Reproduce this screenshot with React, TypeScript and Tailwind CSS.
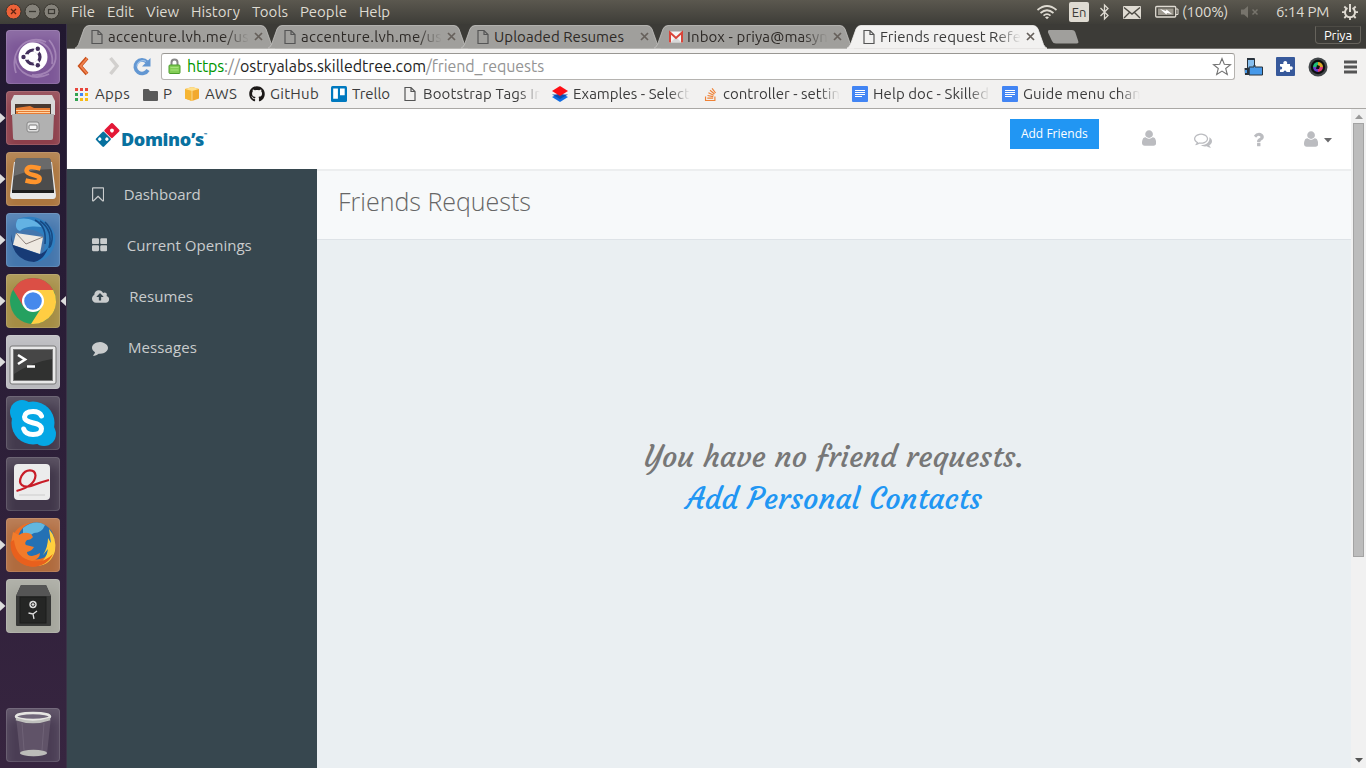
import { useLayoutEffect, useRef, useState, type ReactNode } from "react";
import { FaGithub, FaStackOverflow } from "react-icons/fa";

/* One line of text whose letter spacing is tuned so that it fills `w` pixels. */
function Fit({ w, className = "", children }: { w: number; className?: string; children: string }) {
  const ref = useRef<HTMLSpanElement>(null);
  const [ls, setLs] = useState(0);
  useLayoutEffect(() => {
    if (ref.current) {
      ref.current.style.letterSpacing = "0px";
      const natural = ref.current.getBoundingClientRect().width;
      const next = (w - natural) / children.length;
      ref.current.style.letterSpacing = `${next}px`;
      setLs(next);
    }
  }, [w, children]);
  return (
    <span ref={ref} className={`inline-block shrink-0 whitespace-pre ${className}`} style={{ letterSpacing: `${ls}px` }}>
      {children}
    </span>
  );
}

const UI = "font-['Ubuntu','Noto_Sans',sans-serif]";
const FADE = "[mask-image:linear-gradient(to_right,black_82%,transparent)]";

/* ---------- icons ---------- */

const userPath =
  "M1408 1405q0 120-73 189.5t-194 69.5h-874q-121 0-194-69.5t-73-189.5q0-53 3.5-103.5t14-109 26.5-108.5 43-97.5 62-81 85.5-53.5 111.5-20q9 0 42 21.5t74.5 48 108 48 133.5 21.5 133.5-21.5 108-48 74.5-48 42-21.5q61 0 111.5 20t85.5 53.5 62 81 43 97.5 26.5 108.5 14 109 3.5 103.5zm-320-893q0 159-112.5 271.5t-271.5 112.5-271.5-112.5-112.5-271.5 112.5-271.5 271.5-112.5 271.5 112.5 112.5 271.5z";
const commentsPath =
  "M704 384q-153 0-286 52t-211.5 141-78.5 191q0 82 53 158t149 132l97 56-35 84q34-20 62-39l44-31 53 10q78 14 153 14 153 0 286-52t211.5-141 78.5-191-78.5-191-211.5-141-286-52zm0-128q191 0 353.5 68.5t256.5 186.5 94 257-94 257-256.5 186.5-353.5 68.5q-86 0-176-16-124 88-278 128-36 9-86 16h-3q-11 0-20.5-8t-11.5-21q-1-3-1-6.5t.5-6.5 2-6l2.5-5t3.5-5.5 4-5 4.5-5 4-4.5q5-6 23-25t26-29.5 22.5-29 25-38.5 20.5-44q-124-72-195-177t-71-224q0-139 94-257t256.5-186.5 353.5-68.5zm822 1169q10 24 20.5 44t25 38.5 22.5 29 26 29.5 23 25q1 1 4 4.5t4.5 5 4 5 3.5 5.5l2.5 5t2 6 .5 6.5-1 6.5q-3 14-13 22t-22 7q-50-7-86-16-154-40-278-128-90 16-176 16-271 0-472-132 58 4 88 4 161 0 309-45t264-129q125-92 192-212t67-254q0-77-23-152 129 71 204 178t75 230q0 120-71 224.5t-195 176.5z";
const questionPath =
  "M704 1256v240q0 16-12 28t-28 12h-240q-16 0-28-12t-12-28v-240q0-16 12-28t28-12h240q16 0 28 12t12 28zm316-600q0 54-15.5 101t-35 76.5-55 59.5-57.5 43.5-61 35.5q-41 23-68.5 65t-27.5 67q0 17-12 32.5t-28 15.5h-240q-15 0-25.5-18.5t-10.5-37.5v-45q0-83 65-156.5t143-108.5q59-27 84-56t25-76q0-42-46.5-74t-107.5-32q-65 0-108 29-35 25-107 115-13 16-31 16-12 0-25-8l-164-125q-13-10-15.5-25t5.5-28q160-266 464-266 80 0 161 31t146 83 106 127.5 41 158.5z";
const cloudPath =
  "M1280 864q0-14-9-23l-352-352q-9-9-23-9t-23 9l-351 351q-10 12-10 24 0 14 9 23t23 9h224v352q0 13 9.5 22.5t22.5 9.5h192q13 0 22.5-9.5t9.5-22.5v-352h224q13 0 22.5-9.5t9.5-22.5zm640 288q0 159-112.5 271.5t-271.5 112.5h-1088q-185 0-316.5-131.5t-131.5-316.5q0-130 70-240t188-165q-2-30-2-43 0-212 150-362t362-150q156 0 285.5 87t188.5 231q71-62 166-62 106 0 181 75t75 181q0 76-41 138 130 31 213.5 135.5t83.5 238.5z";
const commentPath =
  "M1792 896q0 174-120 321.5t-326 233-450 85.5q-70 0-145-8-198 175-460 223-49 14-114 22-17 2-30.5-9t-17.5-29v-1q-3-4-.5-12t2-10 4.5-9.5l6-9t7-8.5 8-9q7-8 31-34.5t34.5-38 31-39.5 32.5-51 27-59 26-76q-157-89-247.5-220t-90.5-281q0-130 71-248.5t191-204.5 286-136.5 348-50.5q244 0 450 85.5t326 233 120 321.5z";
const bookmarkPath =
  "M1152 256h-1024v1242l423-406 89-85 89 85 423 406v-1242zm12-128q23 0 44 9 33 13 52.5 41t19.5 62v1289q0 34-19.5 62t-52.5 41q-19 8-44 8-48 0-83-32l-441-424-441 424q-36 33-83 33-23 0-44-9-33-13-52.5-41t-19.5-62v-1289q0-34 19.5-62t52.5-41q21-9 44-9h1048z";
const thLargePath =
  "M768 1024v384q0 52-38 90t-90 38h-512q-52 0-90-38t-38-90v-384q0-52 38-90t90-38h512q52 0 90 38t38 90zm0-768v384q0 52-38 90t-90 38h-512q-52 0-90-38t-38-90v-384q0-52 38-90t90-38h512q52 0 90 38t38 90zm896 768v384q0 52-38 90t-90 38h-512q-52 0-90-38t-38-90v-384q0-52 38-90t90-38h512q52 0 90 38t38 90zm0-768v384q0 52-38 90t-90 38h-512q-52 0-90-38t-38-90v-384q0-52 38-90t90-38h512q52 0 90 38t38 90z";

function Glyph({ d, vw, size }: { d: string; vw: number; size: number }) {
  return (
    <svg width={(vw / 1792) * size} height={size} viewBox={`0 0 ${vw} 1792`} fill="currentColor" className="shrink-0">
      <path d={d} />
    </svg>
  );
}

const Doc = () => (
  <svg width="12" height="16" viewBox="0 0 12 16" fill="none" stroke="#555" strokeWidth="1.2" className="shrink-0">
    <path d="M1 1.500h6l4 4v9H1zM7 1.500v4h4" />
  </svg>
);

const Gmail = () => (
  <svg width="16" height="16" viewBox="0 0 16 16" className="shrink-0">
    <rect x="1" y="2.500" width="14" height="11" fill="#f4f4f4" />
    <path d="M3 13l5-5 5 5z" fill="#d8d8d8" />
    <path d="M2 13.500v-10l6 5.500 6-5.500v10" fill="none" stroke="#d9453a" strokeWidth="2" />
  </svg>
);

const GDoc = () => (
  <svg width="16" height="16" viewBox="0 0 16 16" className="shrink-0">
    <rect width="16" height="16" rx="1" fill="#4285f4" />
    <path d="M3 4.500h10M3 6.500h10M3 8.500h10M3 10.500h7" stroke="#fff" />
  </svg>
);

/* ---------- desktop panel ---------- */

function TopPanel() {
  return (
    <header className={`flex h-6 shrink-0 items-center bg-linear-to-b from-[#5b584f] to-[#3e3d38] text-[15px] leading-6 text-[#dfdbd2] ${UI}`}>
      <svg width="71" height="24" viewBox="0 0 71 24" className="shrink-0">
        <circle cx="13.5" cy="11.5" r="7.5" fill="#ee6238" stroke="#39362f" />
        <path d="M11 9l5 5m0-5l-5 5" stroke="#5e2412" strokeWidth="1.3" />
        <circle cx="32.5" cy="11.5" r="7.5" fill="#85827a" stroke="#39362f" />
        <path d="M29 11.5h7" stroke="#3b3933" strokeWidth="1.3" />
        <circle cx="51.500" cy="11.500" r="7.5" fill="#85827a" stroke="#39362f" />
        <rect x="48.500" y="9.500" width="6" height="4" fill="none" stroke="#3b3933" strokeWidth="1.200" />
      </svg>
      <nav className="flex gap-3">
        <Fit w={24}>File</Fit>
        <Fit w={27}>Edit</Fit>
        <Fit w={33}>View</Fit>
        <Fit w={49}>History</Fit>
        <Fit w={36}>Tools</Fit>
        <Fit w={47}>People</Fit>
        <Fit w={31}>Help</Fit>
      </nav>
      <div className="ml-auto flex items-center">
        <svg width="22" height="16" viewBox="0 0 22 16" fill="none" stroke="#dfdbd2" strokeWidth="1.7">
          <path d="M1.500 6Q11-2 20.500 6M4.500 9Q11 3.500 17.500 9M7.500 11.700Q11 8.500 14.500 11.700" />
          <path d="M9 13.200l2 2 2-2q-2-1.500-4 0z" fill="#dfdbd2" stroke="none" />
        </svg>
        <span className="ml-[11px] flex h-5 w-5 items-center justify-center rounded-[2px] bg-[#dfdbd2] text-[13px] text-[#3c3b37]">En</span>
        <svg width="11" height="18" viewBox="0 0 11 18" fill="none" stroke="#dfdbd2" strokeWidth="1.300" className="ml-[10px]">
          <path d="M1.500 5L9 12.500 5.500 16V2L9 5.500 1.500 13" />
        </svg>
        <svg width="18" height="13" viewBox="0 0 18 13" className="ml-[13px]">
          <rect width="18" height="13" rx="1" fill="#dfdbd2" />
          <path d="M1 1.500L9 8l8-6.500M1 12l5.500-5.500M17 12l-5.500-5.500" fill="none" stroke="#4b4942" strokeWidth="1.400" />
        </svg>
        <svg width="24" height="14" viewBox="0 0 24 14" className="ml-[14px]">
          <rect x=".7" y="1.500" width="20" height="10.500" rx="1" fill="none" stroke="#dfdbd2" strokeWidth="1.300" />
          <path d="M21 4h2v5.500h-2" fill="none" stroke="#dfdbd2" />
          <rect x="3" y="3.500" width="15.500" height="6.500" fill="#9c988e" />
          <path d="M5 4l6 2 .5-1.500 5.500 4.500-5-1-.6 1.500z" fill="#fff" />
        </svg>
        <Fit w={46} className="ml-[3px]">(100%)</Fit>
        <svg width="18" height="14" viewBox="0 0 18 14" className="ml-[13px]" fill="#77746c">
          <path d="M0 4.500h3l4-3.500v12l-4-3.500H0z" />
          <path d="M11.500 4.500l5 5m0-5l-5 5" stroke="#77746c" strokeWidth="1.500" />
        </svg>
        <Fit w={53} className="ml-[17px]">6:14 PM</Fit>
        <svg width="18" height="18" viewBox="0 0 18 18" className="ml-[12px] mr-[7px]" fill="none" stroke="#dfdbd2">
          <path d="M6.500 5a5 5 0 1 0 5 0" strokeWidth="2" />
          <path d="M9 1v8" strokeWidth="2" />
          <path d="M1 9.200h3M14 9.200h3M3.300 3.500l2 2M14.700 3.500l-2 2M3.300 15l2-2M14.700 15l-2-2M9 14v3" strokeWidth="1.800" />
        </svg>
      </div>
    </header>
  );
}

/* ---------- launcher ---------- */

function Tile({ bg, running, active, children }: { bg: string; running?: boolean; active?: boolean; children: ReactNode }) {
  return (
    <div className="relative flex w-full justify-center">
      {running && (
        <svg width="6" height="10" viewBox="0 0 6 10" className="absolute top-[22px] left-0">
          <path d="M0 0l5.500 5L0 10z" fill="#ddd" />
        </svg>
      )}
      {active && (
        <svg width="6" height="10" viewBox="0 0 6 10" className="absolute top-[22px] right-0">
          <path d="M6 0L.5 5 6 10z" fill="#ddd" />
        </svg>
      )}
      <div className={`h-[54px] w-[54px] overflow-hidden rounded-[4px] shadow-[inset_0_0_0_1px_rgba(255,255,255,0.12),inset_0_9px_12px_rgba(255,255,255,0.14)] ${bg}`}>
        <svg width="54" height="54" viewBox="0 0 54 54">{children}</svg>
      </div>
    </div>
  );
}

function Launcher() {
  return (
    <aside className="flex w-[67px] shrink-0 flex-col gap-[7px] border-r border-[#3a3347] bg-linear-to-b from-[#211830] to-[#372540] pt-[6px] pb-[6px]">
      <Tile bg="bg-[#7c5797]">
        <path d="M10 43C3 22 20 3 40 12M43 10c14 16 5 37-17 35M17 18C30 3 49 16 46 34M9 27c2 18 20 24 34 17" fill="none" stroke="#c8aed3" strokeWidth="1.800" opacity=".5" />
        <circle cx="27" cy="27" r="14.500" fill="#fff" />
        <circle cx="27" cy="27" r="7" fill="none" stroke="#43305d" strokeWidth="3.200" />
        <path d="M17 27h5M32 18.300l-2.500 4.300M32 35.700l-2.500-4.300" stroke="#fff" strokeWidth="5.500" />
        <circle cx="17.500" cy="27" r="2.200" fill="#43305d" />
        <circle cx="31.800" cy="18.800" r="2.200" fill="#43305d" />
        <circle cx="31.800" cy="35.200" r="2.200" fill="#43305d" />
      </Tile>
      <Tile bg="bg-[#8d3f4b]" running>
        <path d="M8 4h38l3 6v14H5V10z" fill="#d9d9d9" />
        <path d="M9 13h36v12H9z" fill="#493a32" />
        <path d="M10 17l14-2 4 2h16v7H10z" fill="#e77b33" />
        <path d="M10 19.500h34M12 21.500h32" stroke="#ffd3a1" />
        <path d="M6 23h42l-1 24q0 2-2 2H9q-2 0-2-2z" fill="#b1b1b1" />
        <rect x="21" y="31" width="12" height="10" rx="2" fill="#dedede" stroke="#858585" />
        <rect x="23" y="34" width="8" height="4.500" rx="1" fill="#f7f7f7" stroke="#777" />
      </Tile>
      <Tile bg="bg-[#ac763f]" running>
        <path d="M8 10L4 43q0 4 3 4h40q3 0 3-4L46 10z" fill="#e8e8e8" />
        <path d="M12 6h30q3 0 3 4l3 28H6L9 10q0-4 3-4z" fill="#4c4c4c" />
        <path d="M6 38h42v3H6z" fill="#1d1d1d" />
        <path d="M12 6h30q3 0 3 4l1 7q-20 0-38 7L9 10q0-4 3-4z" fill="#888" opacity=".5" />
        <path d="M34.500 16.500q-13-4-14 2 0 3 7 4.500t6 4.500q-1 4.500-14 1" fill="none" stroke="#ff942c" strokeWidth="4.500" />
      </Tile>
      <Tile bg="bg-[#4476ad]" running>
        <path d="M12 6C26 0 44 6 49 22c2 12-6 26-20 27 10-8 12-18 8-27-6-5-14-7-23-4-4-2-5-8-2-12z" fill="#2f7fc0" />
        <path d="M12 6c9-2 18 1 24 8-8-1-17-1-22 4-5-1-5-8-2-12z" fill="#63b2e3" />
        <path d="M34 8c9 6 12 15 9 27M39 9c8 8 9 16 5 25M29 7c9 5 11 12 10 24" fill="none" stroke="#174a84" strokeWidth="1.600" />
        <path d="M10 20l27 4-3 17-27-9z" fill="#eee9e1" />
        <path d="M10 20l10 11 17-7" fill="none" stroke="#8c817b" />
        <path d="M5 21l2 11 26 9q4 0 9-6-4 12-14 14Q5 47 5 21z" fill="#173b76" />
      </Tile>
      <Tile bg="bg-[#a58d44]" running active>
        <circle cx="27" cy="27" r="23" fill="#25a160" />
        <path d="M27 16h20.200A23 23 0 0 1 25 50l11.500-18z" fill="#ffcd42" />
        <path d="M7.100 15.500A23 23 0 0 1 47.200 16H27L17 32z" fill="#db4f45" />
        <circle cx="27" cy="27" r="11" fill="#fff" />
        <circle cx="27" cy="27" r="8.800" fill="#4689ec" />
      </Tile>
      <Tile bg="bg-[#b9b9bd]" running>
        <rect x="4" y="11" width="46" height="38" rx="2" fill="#e8e8e8" stroke="#777" />
        <rect x="7.500" y="14.500" width="39" height="31" fill="#303130" stroke="#777" />
        <path d="M8 15h38v9q-20 3-38 15z" fill="#555" opacity=".6" />
        <path d="M12 20l7 4.500-7 4.500M21 31.500h8" fill="none" stroke="#fff" strokeWidth="2.600" />
      </Tile>
      <Tile bg="bg-[#433a4d]">
        <circle cx="27" cy="27" r="21.500" fill="#05a7e5" />
        <circle cx="16" cy="16" r="12" fill="#05a7e5" />
        <circle cx="38" cy="38" r="12" fill="#05a7e5" />
        <path d="M35.500 20q-2-4.500-8.500-4.500-8 0-8.500 5.500 0 4 8 5.700 9 1.800 9 6Q35.500 38.500 27 38.500q-7.500 0-9.300-5.500" fill="none" stroke="#fff" strokeWidth="5" strokeLinecap="round" />
      </Tile>
      <Tile bg="bg-[#41374a]">
        <rect x="8" y="7" width="36" height="36" rx="4" fill="#ececec" />
        <path d="M10.500 34Q29 29 29.500 18.500C29 12 20 11 15.500 19 11 28 18 31 25 29q10-4 18-6" fill="none" stroke="#c81d28" strokeWidth="2.200" />
        <path d="M13 38h26" stroke="#ccc" />
      </Tile>
      <Tile bg="bg-[#b06b3e]" running>
        <circle cx="27" cy="26.500" r="22" fill="#ee6f24" />
        <circle cx="30" cy="23" r="18.500" fill="#2471b4" />
        <path d="M17 10q12-9 22-3-3 8-11 8-5 4-11 3z" fill="#62b7df" />
        <path d="M43 11q8 9 6 22-4 14-18 15 10-7 11-17l-5 6q5-8 5-17l3 5z" fill="#ffcf3e" />
        <path d="M7 14l6 3q5-4 12-1l2 3q-2 3-6 3-3 3-1 5l8 2q-2 4-7 5 0 4 5 4 5-1 8-3 0 6-8 8-12 2-18-8-4-9-1-21z" fill="#f27b2a" />
        <path d="M4.500 24Q4 44 24 48.500 40 50 47 36q-9 9-21 7Q10 40 8 22z" fill="#e8601d" />
      </Tile>
      <Tile bg="bg-[#a5a69d]" running>
        <path d="M15 6h25l5 11v29q0 1-1 1H11q-1 0-1-1V17z" fill="#373837" />
        <path d="M15 6h25l5 11H10z" fill="#555" />
        <rect x="14" y="18" width="26" height="26" fill="#252625" stroke="#1c1c1c" />
        <circle cx="27" cy="25.500" r="3.700" fill="#ddd" />
        <circle cx="27" cy="25.500" r="1.800" fill="none" stroke="#282828" />
        <path d="M22.500 34l4.500 1 4-3M27 35l1 5" stroke="#ddd" strokeWidth="1.300" fill="none" />
      </Tile>
      <div className="mt-auto">
        <Tile bg="bg-[#4a3d54]">
          <path d="M10 9l4 37q14 5 27 0l4-37z" fill="#75697c" opacity=".5" />
          <path d="M16 15l2 27M38 15l-2 27" stroke="#9a90a0" opacity=".25" />
          <ellipse cx="27.500" cy="45" rx="13.500" ry="3.200" fill="#bcbcb9" />
          <ellipse cx="27" cy="8.500" rx="17" ry="3.500" fill="#70677a" stroke="#e6e6e3" strokeWidth="2.500" />
          <path d="M10 11q17 6 34 0" fill="none" stroke="#bfc0bd" strokeWidth="2.500" />
        </Tile>
      </div>
    </aside>
  );
}

/* ---------- browser ---------- */

function Tab({ icon, title, w, active }: { icon: ReactNode; title: string; w: number; active?: boolean }) {
  return (
    <div className={`relative mr-[-7px] flex h-[25px] w-[200px] shrink-0 items-center pl-4 ${active ? "z-10" : ""}`}>
      <svg width="200" height="25" viewBox="0 0 200 25" className="absolute inset-0">
        <path
          d="M-1 24.500Q2 24 3.500 20.500L9 5Q10.500 1.500 14 1.500H186Q189.500 1.500 191 5L196.500 20.500Q198 24 201 24.500z"
          fill={active ? "#f2f1f0" : "#a09f9c"}
          stroke={active ? "#f2f1f0" : "#c4c3c0"}
          strokeWidth=".8"
        />
      </svg>
      <div className="relative flex items-center">
        <span className="flex w-[17px]">{icon}</span>
        <div className={`flex w-[141px] overflow-hidden ${w > 135 ? FADE : ""}`}>
          <Fit w={w} className={active ? "text-[#3b3b3b]" : "text-[#2d2926]"}>{title}</Fit>
        </div>
        <svg width="9" height="9" viewBox="0 0 9 9" className="ml-[5px]">
          <path d="M1 1l7 7m0-7L1 8" stroke="#66605b" strokeWidth="1.700" />
        </svg>
      </div>
    </div>
  );
}

function TabStrip() {
  return (
    <div className={`flex h-[25px] shrink-0 border-b border-[#74726f] bg-[#3c3b37] pl-2 text-[15px] leading-5 ${UI}`}>
      <Tab icon={<Doc />} title="accenture.lvh.me/us" w={141} />
      <Tab icon={<Doc />} title="accenture.lvh.me/us" w={141} />
      <Tab icon={<Doc />} title="Uploaded Resumes" w={130} />
      <Tab icon={<span className="-ml-[2px]"><Gmail /></span>} title="Inbox - priya@masyn" w={141} />
      <Tab icon={<Doc />} title="Friends request Refe" w={141} active />
      <svg width="32" height="25" viewBox="0 0 32 25" className="ml-[7px] shrink-0">
        <path d="M2 6h23q2.500 0 3.200 2l3 9q.8 2.500-1.500 2.500H9q-3 0-4-2.500L1 8.500Q.5 6 2 6z" fill="#a09f9c" />
      </svg>
      <div className="mt-[2px] mr-[5px] ml-auto flex h-[18px] w-[46px] items-center justify-center self-start rounded-b-[4px] border border-[#66635c] border-t-[#4d4b45] text-[13px] text-white">
        <Fit w={28}>Priya</Fit>
      </div>
    </div>
  );
}

function Toolbar() {
  return (
    <div className={`flex h-[31px] shrink-0 items-center bg-[#f2f1f0] pt-1 text-[16px] leading-6 ${UI}`}>
      <svg width="94" height="27" viewBox="0 0 94 27" fill="none" className="shrink-0">
        <path d="M20 5l-7 8 7 8" stroke="#c84f19" strokeWidth="3.800" />
        <path d="M20 5.500L13.500 13l6.500 7.500" stroke="#f08250" strokeWidth="1.800" />
        <path d="M43.500 5l6.500 8-6.500 8" stroke="#d2d0ce" strokeWidth="3.500" />
        <path d="M80 9a6.800 6.800 0 1 0 1 8" stroke="#6397d2" strokeWidth="3.600" />
        <path d="M83.500 5v8.500H75z" fill="#6397d2" />
        <path d="M79 8.500a6 6 0 0 0-9 5" stroke="#a3c5eb" strokeWidth="1.200" />
      </svg>
      <div className="flex h-[27px] w-[1074px] shrink-0 items-center rounded-[3px] border border-[#b5b3b0] border-t-[#999793] bg-white pl-[6px]">
        <svg width="13" height="17" viewBox="0 0 13 17">
          <path d="M3.500 8V4.500a3 3 0 0 1 6 0V8" fill="none" stroke="#888" strokeWidth="2" />
          <rect x="1" y="7" width="11" height="8.500" rx="1" fill="#83cd55" stroke="#4b9c2c" />
          <path d="M2.500 9.500h8M2.500 12h8" stroke="#a6e27d" />
        </svg>
        <div className="ml-[6px] flex pb-[2px]">
          <Fit w={37} className="text-[#009600]">https</Fit>
          <Fit w={16} className="text-[#8d8d8d]">://</Fit>
          <Fit w={186} className="text-[#1e1e1e]">ostryalabs.skilledtree.com</Fit>
          <Fit w={118} className="text-[#949494]">/friend_requests</Fit>
        </div>
        <svg width="20" height="19" viewBox="0 0 20 19" className="mr-[2px] ml-auto" fill="none" stroke="#737373" strokeWidth="1.100">
          <path d="M10 1.500l2.300 5.700 6.200.4-4.800 3.900 1.600 6-5.300-3.400-5.300 3.400 1.600-6L1.500 7.600l6.200-.4z" />
        </svg>
      </div>
      <svg width="19" height="19" viewBox="0 0 19 19" className="ml-[9px] shrink-0">
        <path d="M3.500 1.500h7v11h-7z" fill="#86beee" stroke="#29333d" />
        <path d="M8 10h2V8h1v2h7.500v8H5v-8z" fill="#4799e9" stroke="#29333d" />
        <path d="M.5 11h5v7H1zM3 1h7v2H3z" fill="#29333d" />
        <path d="M1 13h2v3H1z" fill="#4799e9" />
      </svg>
      <svg width="19" height="19" viewBox="0 0 19 19" className="ml-[13px] shrink-0">
        <rect width="19" height="19" rx="1" fill="#37599b" />
        <path d="M4 7h3.500a2 2 0 1 1 3.500 0h3v2.500a1.800 1.800 0 1 1 0 3V15h-3.500a1.500 1.500 0 1 0-3 0H4v-2.500a1.600 1.600 0 1 0 0-3z" fill="#fff" />
      </svg>
      <svg width="20" height="20" viewBox="0 0 20 20" className="ml-[13px] shrink-0">
        <circle cx="10" cy="10" r="9.500" fill="#42474a" />
        <circle cx="10" cy="10" r="7.200" fill="#0c0e0f" />
        <path d="M10 10V5a5 5 0 0 1 5 5z" fill="#d8a728" />
        <path d="M10 10h5a5 5 0 0 1-5 5z" fill="#df3a77" />
        <path d="M10 10v5a5 5 0 0 1-5-5z" fill="#673fcb" />
        <path d="M10 10H5a5 5 0 0 1 5-5z" fill="#1dbe79" />
        <path d="M9 8l3 1-1 3H8z" fill="#111" />
      </svg>
      <svg width="13" height="14" viewBox="0 0 13 14" className="ml-[16px] shrink-0">
        <path d="M0 2h13M0 7h13M0 12h13" stroke="#555" strokeWidth="2.800" />
      </svg>
    </div>
  );
}

function Mark({ icon, label, w, box, clip }: { icon: ReactNode; label: string; w: number; box: string; clip?: boolean }) {
  return (
    <div className={`flex shrink-0 items-center ${box}`}>
      {icon}
      <div className={`ml-auto flex overflow-hidden ${clip ? `w-[117px] ${FADE}` : ""}`}>
        <Fit w={w}>{label}</Fit>
      </div>
    </div>
  );
}

function Bookmarks() {
  const dots = ["#e7453c", "#e7453c", "#e7453c", "#32a350", "#4285f4", "#f8bb15", "#32a350", "#f8bb15", "#f8bb15"];
  return (
    <div className={`flex h-[29px] shrink-0 items-center border-b border-[#aaa8a5] bg-[#f2f1f0] pl-2 text-[15px] leading-5 text-[#3c3c3c] ${UI}`}>
      <Mark box="w-[55px]" w={35} label="Apps" icon={
        <svg width="13" height="13" viewBox="0 0 13 13">
          {dots.map((c, i) => <rect key={i} x={(i % 3) * 5} y={Math.floor(i / 3) * 5} width="3" height="3" fill={c} />)}
        </svg>} />
      <div className="ml-[13px]"><Mark box="w-[29px]" w={9} label="P" icon={
        <svg width="15" height="13" viewBox="0 0 15 13"><path d="M1 1h4.500L7 3h7q1 0 1 1v8q0 1-1 1H1q-1 0-1-1V2q0-1 1-1z" fill="#5a5a5a" /></svg>} /></div>
      <div className="ml-[12px]"><Mark box="w-[53px]" w={32} label="AWS" icon={
        <svg width="16" height="16" viewBox="0 0 16 16"><path d="M1 3l7-2 7 2v9.500L8 15l-7-2.500z" fill="#f2a92d" /><path d="M1 3l7 2v10l-7-2.500z" fill="#f6b533" /><path d="M1 3l7-2 7 2-7 2z" fill="#ffe08b" /><path d="M8 5v10" stroke="#fff1cb" strokeWidth=".6" /></svg>} /></div>
      <div className="ml-[12px]"><Mark box="w-[70px]" w={49} label="GitHub" icon={<FaGithub size={16} color="#1b1817" />} /></div>
      <div className="ml-[12px]"><Mark box="w-[59px]" w={38} label="Trello" icon={
        <svg width="16" height="16" viewBox="0 0 16 16"><rect width="16" height="16" rx="1.500" fill="#0079bf" /><path d="M2.200 2.500h4.700v10.300H2.200zM9 2.500h4.700v6.700H9z" fill="#fff" /></svg>} /></div>
      <div className="ml-[14px]"><Mark box="w-[136px]" w={120} clip label="Bootstrap Tags In" icon={<Doc />} /></div>
      <div className="ml-[12px]"><Mark box="w-[138px]" w={117} clip label="Examples - Select" icon={
        <svg width="16" height="16" viewBox="0 0 16 16"><path d="M0 11l8-4 8 4-8 5z" fill="#116ce2" /><path d="M0 8.500h16L8 13z" fill="#0d4fae" /><path d="M0 5l8-5 8 5-8 5z" fill="#ff0e14" /></svg>} /></div>
      <div className="ml-[13px]"><Mark box="w-[137px]" w={117} clip label="controller - settin" icon={<FaStackOverflow size={15} color="#ef8236" />} /></div>
      <div className="ml-[12px]"><Mark box="w-[138px]" w={116} clip label="Help doc - Skilled" icon={<GDoc />} /></div>
      <div className="ml-[12px]"><Mark box="w-[138px]" w={118} clip label="Guide menu chan" icon={<GDoc />} /></div>
    </div>
  );
}

/* ---------- page ---------- */

function SideItem({ d, vw, size, gap, label, w }: { d: string; vw: number; size: number; gap: string; label: string; w: number }) {
  return (
    <a className="flex h-[51px] items-center pl-[25px] text-[#c9cccd]">
      <Glyph d={d} vw={vw} size={size} />
      <span className={gap}><Fit w={w}>{label}</Fit></span>
    </a>
  );
}

function PageHeader() {
  return (
    <div className="flex h-[60px] shrink-0 items-start bg-white pl-7 text-[#bbbcc0]">
      <div className="flex pt-[13px]">
        <svg width="26" height="26" viewBox="0 0 26 26">
          <g transform="rotate(45 12.500 13)">
            <rect x="6.800" y="1" width="11.400" height="11.500" rx="1.200" fill="#e31837" />
            <rect x="6.800" y="13.200" width="11.400" height="11.500" rx="1.200" fill="#08719f" />
            <circle cx="12.500" cy="6.700" r="1.900" fill="#fff" />
            <circle cx="10" cy="21.400" r="1.700" fill="#fff" />
            <circle cx="15" cy="16.400" r="1.700" fill="#fff" />
          </g>
        </svg>
        <span className="flex pt-[5px] font-['Open_Sans',sans-serif] text-[18px] leading-[24px] font-extrabold text-[#08719f]">
          <Fit w={83}>Domino’s</Fit>
          <span className="pt-[4px] text-[4px] leading-[8px]">™</span>
        </span>
      </div>
      <button className="mt-[10px] mr-[43px] ml-auto flex h-[30px] w-[89px] items-center justify-center bg-[#2196f3] pb-[1px] text-[12px] text-white">
        <Fit w={67}>Add Friends</Fit>
      </button>
      <div className="flex pt-[20px]">
        <Glyph d={userPath} vw={1408} size={18} />
        <span className="ml-[38px] pt-[2px]"><Glyph d={commentsPath} vw={1792} size={18} /></span>
        <span className="ml-[41px] pt-[1px]"><Glyph d={questionPath} vw={1024} size={19} /></span>
        <span className="ml-[40px] pt-[1px]"><Glyph d={userPath} vw={1408} size={18} /></span>
        <svg width="8" height="5" viewBox="0 0 8 5" className="mt-[9px] mr-[19px] ml-[6px]"><path d="M0 0h8L4 4.500z" fill="#69696b" /></svg>
      </div>
    </div>
  );
}

function Page() {
  return (
    <div className="flex min-h-0 flex-1 font-['Open_Sans',sans-serif]">
      <div className="flex min-w-0 flex-1 flex-col">
        <PageHeader />
        <div className="flex min-h-0 flex-1">
          <nav className="flex w-[250px] shrink-0 flex-col bg-[#37474f] text-[15px]">
            <SideItem d={bookmarkPath} vw={1280} size={17} gap="ml-[19.500px]" label="Dashboard" w={77} />
            <SideItem d={thLargePath} vw={1664} size={16.5} gap="ml-[19.500px]" label="Current Openings" w={125} />
            <SideItem d={cloudPath} vw={1920} size={16} gap="ml-[20px]" label="Resumes" w={64} />
            <SideItem d={commentPath} vw={1792} size={16} gap="ml-[20px]" label="Messages" w={69} />
          </nav>
          <main className="flex min-w-0 flex-1 flex-col bg-[#eaeff2]">
            <div className="flex h-[71px] shrink-0 items-center border-t-2 border-b border-t-[#eceeef] border-b-[#dee3e7] bg-[#f7f9fa] pb-[8px] pl-[21px]">
              <h1 className="text-[25px] leading-8 font-light text-[#666]"><Fit w={193}>Friends Requests</Fit></h1>
            </div>
            <div className="flex flex-col items-center pt-[196px] font-['Courgette','Lato',cursive] text-[30px] leading-[42px] text-[#777]">
              <p><Fit w={379}>You have no friend requests.</Fit></p>
              <p className="text-[#2196f3]"><Fit w={296}>Add Personal Contacts</Fit></p>
            </div>
          </main>
        </div>
      </div>
      <div className="flex w-[15px] shrink-0 flex-col items-center justify-between bg-[#f1f1f1] py-[5px]">
        <div className="flex flex-col items-center gap-[4px]">
          <svg width="8" height="5" viewBox="0 0 8 5"><path d="M0 5l4-4.500L8 5z" fill="#999" /></svg>
          <div className="h-[434px] w-[11px] border border-[#a3a3a3] bg-[#bcbcbc]" />
        </div>
        <svg width="8" height="5" viewBox="0 0 8 5"><path d="M0 0l4 4.500L8 0z" fill="#555" /></svg>
      </div>
    </div>
  );
}

export default function App() {
  return (
    <div className="flex h-[768px] w-[1366px] flex-col overflow-hidden">
      <TopPanel />
      <div className="flex min-h-0 flex-1">
        <Launcher />
        <div className="flex min-w-0 flex-1 flex-col">
          <TabStrip />
          <Toolbar />
          <Bookmarks />
          <Page />
        </div>
      </div>
    </div>
  );
}
